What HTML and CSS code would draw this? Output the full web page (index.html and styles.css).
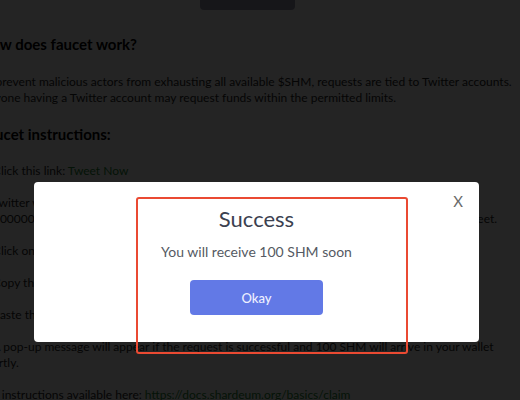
FILE: index.html
```html
<!DOCTYPE html>
<html>
<head>
<meta charset="utf-8">
<link rel="stylesheet" href="styles.css">
</head>
<body>
<div class="page">
  <div class="topbar"><div class="top-btn"></div></div>
  <h2 class="heading">How does faucet work?</h2>
  <p class="para">To prevent malicious actors from exhausting all available $SHM, requests are tied to Twitter accounts.<br>Anyone having a Twitter account may request funds within the permitted limits.</p>
  <h2 class="heading">Faucet instructions:</h2>
  <div class="steps">
    <p class="step">1. Click this link: <span class="link">Tweet Now</span></p>
    <p class="step">2. Twitter will open with a pre-filled tweet containing your wallet address<br>0x0000000000000000000000000000000000000000 for requesting test tokens, send the tweet.</p>
    <p class="step">3. Click on the tweet you just posted to open it.</p>
    <p class="step">4. Copy the link of the tweet from the address bar.</p>
    <p class="step">5. Paste the link in the input field above and click submit.</p>
    <p class="step">6. A pop-up message will appear if the request is successful and 100 SHM will arrive in your wallet<br>shortly.</p>
    <p class="step">Full instructions available here: <span class="link">https://docs.shardeum.org/basics/claim</span></p>
  </div>
</div>
<div class="overlay">
  <div class="modal">
    <button class="close">X</button>
    <div class="modal-body">
      <h3 class="title">Success</h3>
      <p class="message">You will receive 100 SHM soon</p>
      <button class="okay">Okay</button>
    </div>
    <div class="highlight"></div>
  </div>
</div>
</body>
</html>
```
FILE: styles.css
```css
html, body {
  margin: 0;
  padding: 0;
  background: #ffffff;
  overflow: hidden;
}
body {
  width: 520px;
  height: 400px;
  font-family: "Lato", "Open Sans", sans-serif;
  color: #262626;
}
.page {
  margin-left: -20px;
  width: 560px;
}
.topbar {
  display: flex;
  justify-content: flex-start;
  padding-left: 220px;
}
.top-btn {
  width: 95px;
  height: 10px;
  background: #9a9ab0;
  border-radius: 0 0 4px 4px;
}
.heading {
  margin: 0;
  font-size: 15px;
  font-weight: 700;
  line-height: 20px;
  color: #000;
}
.heading:first-of-type {
  margin-top: 24px;
}
.para {
  margin: 20px 0 18px;
  font-size: 12px;
  line-height: 16px;
}
.steps {
  margin-top: 19px;
}
.step {
  margin: 0 0 16px;
  font-size: 12px;
  line-height: 16px;
}
.link {
  color: #1c8a34;
}
.overlay {
  position: fixed;
  inset: 0;
  background: rgba(0, 0, 0, 0.86);
  display: flex;
  justify-content: center;
  align-items: flex-start;
  padding: 182px 7px 0 0;
  box-sizing: border-box;
}
.modal {
  position: relative;
  width: 445px;
  height: 160px;
  background: #fff;
  border-radius: 4px;
  display: flex;
  flex-direction: column;
  align-items: center;
}
.close {
  position: absolute;
  top: 10px;
  right: 16px;
  border: none;
  background: none;
  padding: 0;
  font-family: "Lato", sans-serif;
  font-size: 15px;
  font-weight: 400;
  color: #6a6a6a;
}
.modal-body {
  display: flex;
  flex-direction: column;
  align-items: center;
  padding-top: 23px;
}
.title {
  margin: 0;
  font-size: 22px;
  font-weight: 400;
  line-height: 28px;
  color: #3b4150;
}
.message {
  margin: 10px 0 0;
  font-size: 14px;
  line-height: 18px;
  color: #555a63;
}
.okay {
  margin-top: 19px;
  width: 133px;
  height: 35px;
  border: none;
  border-radius: 4px;
  background: #6279e6;
  color: #eef0ff;
  font-family: "Lato", sans-serif;
  font-size: 13px;
  font-weight: 500;
}
.highlight {
  position: absolute;
  left: 102px;
  top: 15px;
  width: 272px;
  height: 157px;
  box-sizing: border-box;
  border: 2.5px solid #ea4a32;
  border-radius: 3px;
}
```
